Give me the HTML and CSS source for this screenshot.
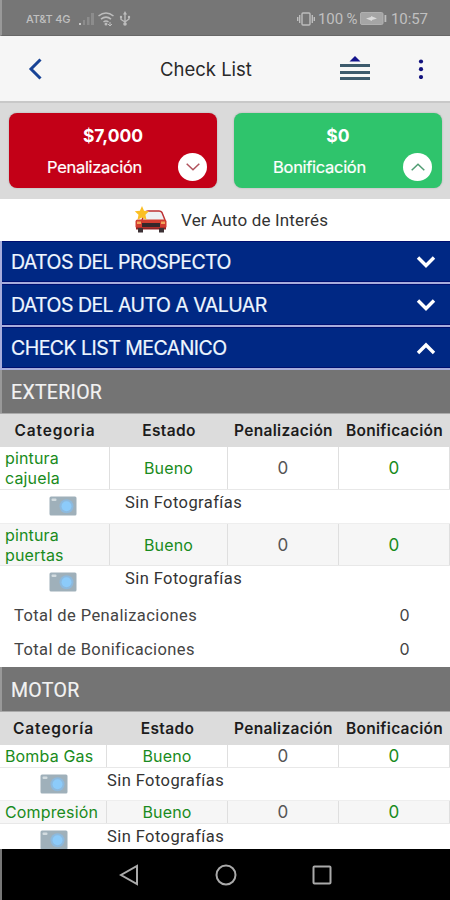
FILE: index.html
```html
<!DOCTYPE html>
<html lang="es">
<head>
<meta charset="utf-8">
<title>Check List</title>
<link rel="stylesheet" href="styles.css">
</head>
<body>
<svg class="defs" width="0" height="0">
  <symbol id="camera" viewBox="0 0 28 20">
    <rect x=".5" y=".5" width="27" height="19" rx="1.5" fill="#9fb0ba"/>
    <rect x="2.5" y="2.5" width="5" height="2.5" rx="1" fill="#d3dce0"/>
    <circle cx="17.5" cy="10.3" r="7" fill="#8db9dd"/>
    <circle cx="17.5" cy="10.3" r="5" fill="#8ccbfa"/>
  </symbol>
</svg>
<div class="screen">
  <header class="status">
    <span class="carrier">AT&amp;T 4G</span>
    <svg class="status-icons" width="54" height="16" viewBox="0 0 54 16">
      <g fill="#8c8c8c"><rect x="0" y="12" width="2" height="2" fill="#c8c8c8"/><rect x="4" y="9" width="2" height="5"/><rect x="8" y="6" width="2.5" height="8"/><rect x="12" y="2" width="3" height="12"/></g>
      <g fill="none" stroke="#bdbdbd" stroke-width="1.6"><path d="M19.5 5Q27-1 34.500 5M22 8.200Q27 4 32 8.200M24.500 11Q27 9 29.500 11"/><path d="M31 11v3m-2-1l2 2 2-2" stroke-width="1"/></g>
      <circle cx="27" cy="13" r="1.500" fill="#bdbdbd"/>
      <g fill="none" stroke="#bdbdbd" stroke-width="1.300"><path d="M46 2v11M42 5.500v3l4 2.500 4-3V5.500"/></g>
      <path d="M46 0l2 3.500h-4z" fill="#bdbdbd"/><circle cx="46" cy="13" r="1.800" fill="#bdbdbd"/><circle cx="42" cy="6" r="1.200" fill="#bdbdbd"/><circle cx="50" cy="6" r="1.200" fill="#bdbdbd"/>
    </svg>
    <svg class="vibrate" width="18" height="14" viewBox="0 0 18 14" fill="none" stroke="#bdbdbd" stroke-width="1.400"><rect x="5" y="1" width="8" height="12" rx="1"/><path d="M2.700 3v8M15.300 3v8M.700 5v4M17.300 5v4"/></svg>
    <span class="percent">100 %</span>
    <svg class="battery" width="27" height="13" viewBox="0 0 27 13"><rect x=".5" y=".5" width="22.500" height="12" rx="1.500" fill="#a5a5a5" stroke="#b0b0b0"/><path d="M6 6.500l5-1.500v-1l6 2.500-5 1.500v1z" fill="#dadada"/><rect x="24.500" y="3" width="1.800" height="7" fill="#bdbdbd"/></svg>
    <span class="clock">10:57</span>
  </header>
  <nav class="appbar">
    <svg class="back" width="14" height="22" viewBox="0 0 14 22" fill="none" stroke="#174396" stroke-width="3"><path d="M12.500 1.500L3 11l9.500 9.500"/></svg>
    <h1 class="title">Check List</h1>
    <svg class="sort" width="30" height="26" viewBox="0 0 30 26"><path d="M15 0l5.500 5.500h-11z" fill="#14148c"/><g fill="#3c5a6c"><rect y="8" width="30" height="3"/><rect y="15" width="30" height="3"/><rect y="21" width="30" height="3"/></g></svg>
    <svg class="more" width="6" height="20" viewBox="0 0 6 20" fill="#12127e"><circle cx="3" cy="2.500" r="2.100"/><circle cx="3" cy="10.200" r="2.100"/><circle cx="3" cy="18" r="2.100"/></svg>
  </nav>
  <section class="cards">
    <div class="card red">
      <strong class="amount">$7,000</strong><span class="label">Penalización</span>
      <span class="round"><svg width="14" height="8" viewBox="0 0 14 8" fill="none" stroke="#b0525c" stroke-width="1.500"><path d="M.7.7L7 6.800 13.300.7"/></svg></span>
    </div>
    <div class="card green">
      <strong class="amount">$0</strong><span class="label">Bonificación</span>
      <span class="round"><svg width="14" height="8" viewBox="0 0 14 8" fill="none" stroke="#4f9c72" stroke-width="1.500"><path d="M.7 7.300L7 1.200l6.300 6.100"/></svg></span>
    </div>
  </section>
  <div class="interest">
    <svg width="34" height="28" viewBox="0 0 34 28">
      <path d="M8 14l3-7.500q1-1.500 3-1.500h11q2 0 3 1.500l3 7.500" fill="#eef0f2" stroke="#bd3032" stroke-width="1.500"/>
      <rect x="1.500" y="13.500" width="31" height="9" rx="2" fill="#d13d30"/>
      <rect x="8" y="17" width="18" height="4" fill="#33282b"/><rect x="3" y="15.500" width="4" height="2.500" fill="#f3a55c"/><rect x="27" y="15.500" width="4" height="2.500" fill="#f3a55c"/>
      <path d="M2 21.500h30v2H2z" fill="#8c2526"/><path d="M4 22h5v4.500H4zM25 22h5v4.500h-5z" fill="#3c3135"/>
      <path d="M8 0l2 4.700 5 .5-3.600 3.600 1.100 5L8 11.400l-4.500 2.400 1-5L.8 5.200l5.100-.5z" fill="#fbbf24"/>
    </svg>
    <span>Ver Auto de Interés</span>
  </div>
  <section class="accordion">
    <div class="fold"><span>DATOS DEL PROSPECTO</span><svg width="20" height="14" viewBox="0 0 20 14"><path d="M2 2.500l8 8 8-8"/></svg></div>
    <div class="fold"><span>DATOS DEL AUTO A VALUAR</span><svg width="20" height="14" viewBox="0 0 20 14"><path d="M2 2.500l8 8 8-8"/></svg></div>
    <div class="fold"><span>CHECK LIST MECANICO</span><svg width="20" height="14" viewBox="0 0 20 14"><path d="M2 12l8-8 8 8"/></svg></div>
  </section>
  <main>
    <h2 class="group">EXTERIOR</h2>
    <section class="table first">
      <div class="row head"><span>Categoria</span><span>Estado</span><span>Penalización</span><span>Bonificación</span></div>
      <div class="row item"><span>pintura cajuela</span><span>Bueno</span><span class="zero">0</span><span class="zero">0</span></div>
      <div class="photo"><svg width="28" height="20"><use href="#camera"/></svg><span>Sin Fotografías</span></div>
      <div class="row item even"><span>pintura puertas</span><span>Bueno</span><span class="zero">0</span><span class="zero">0</span></div>
      <div class="photo"><svg width="28" height="20"><use href="#camera"/></svg><span>Sin Fotografías</span></div>
    </section>
    <div class="total"><span>Total de Penalizaciones</span><b>0</b></div>
    <div class="total"><span>Total de Bonificaciones</span><b>0</b></div>
    <h2 class="group motor">MOTOR</h2>
    <section class="table second">
      <div class="row head"><span>Categoría</span><span>Estado</span><span>Penalización</span><span>Bonificación</span></div>
      <div class="row item"><span>Bomba Gas</span><span>Bueno</span><span class="zero">0</span><span class="zero">0</span></div>
      <div class="photo"><svg width="28" height="20"><use href="#camera"/></svg><span>Sin Fotografías</span></div>
      <div class="row item even"><span>Compresión</span><span>Bueno</span><span class="zero">0</span><span class="zero">0</span></div>
      <div class="photo"><svg width="28" height="20"><use href="#camera"/></svg><span>Sin Fotografías</span></div>
    </section>
  </main>
  <footer class="navbar">
    <svg width="20" height="22" viewBox="0 0 20 22"><path d="M18 2v18L2 11z"/></svg>
    <svg width="22" height="22" viewBox="0 0 22 22"><circle cx="11" cy="11" r="9.500"/></svg>
    <svg width="20" height="20" viewBox="0 0 20 20"><rect x="1.500" y="1.500" width="17" height="17" rx="1"/></svg>
  </footer>
</div>
</body>
</html>
```

FILE: styles.css
```css
* { box-sizing: border-box; }
body { margin: 0; background: #fff; font-family: Inter, "Liberation Sans", sans-serif; color: #333; }
svg { display: block; flex: none; }
.defs { position: absolute; }
.screen { width: 450px; height: 900px; display: flex; flex-direction: column; overflow: hidden; }
.status, .appbar, .cards, .interest, .accordion, .group, .total, .navbar { flex: none; }
h1, h2 { margin: 0; font-weight: 400; }
span, h1, h2, strong { white-space: nowrap; }

.status { height: 36px; display: flex; align-items: center; background: #767676; border-left: 2px solid #999; border-bottom: 1px solid #686868; padding: 2px 20px 0 24px; color: #c0c0c0; font-family: Roboto, sans-serif; }
.carrier { width: 53px; font: 500 11px Inter, sans-serif; letter-spacing: -.2px; }
.vibrate { margin-left: 164px; }
.percent { width: 41px; margin-left: 3px; font-size: 15px; letter-spacing: -.1px; }
.battery { margin-left: 1px; }
.clock { margin-left: 4px; font-size: 15px; letter-spacing: -.1px; }

.appbar { height: 67px; display: flex; align-items: center; background: #f6f6f6; border-bottom: 2px solid #c8c8c8; padding-left: 28px; }
.title { width: 180px; margin-left: 118px; font-size: 18.5px; color: #292929; }
.more { margin-left: 48px; }

.cards { height: 96px; display: flex; gap: 17px; background: #dadada; padding: 10px 8px 11px 9px; }
.card { position: relative; flex: 1; border-radius: 8px; color: #fff; text-align: center; box-shadow: 0 0 2px #aaa; }
.red { background: #c30017; }
.green { background: #2fc46c; }
.amount { display: block; padding-top: 11px; font-size: 17.5px; line-height: 24px; font-weight: 700; }
.label { display: block; margin: 7px 37px 0 0; font-size: 16.5px; line-height: 24px; letter-spacing: -.3px; -webkit-text-stroke: .2px currentColor; }
.round { position: absolute; right: 10px; bottom: 7px; width: 29px; height: 28px; border-radius: 50%; background: #fff; display: flex; align-items: center; justify-content: center; }

.interest { height: 42px; display: flex; align-items: center; padding: 0 0 0 134px; gap: 13px; font: 17px Roboto, sans-serif; letter-spacing: .17px; }
.accordion { height: 129px; background: #a8addc; padding-left: 2px; display: grid; grid-template-rows: 41px 41px 41px; gap: 2px; }
.fold { display: flex; align-items: center; justify-content: space-between; background: #002884; color: #eef6ff; padding: 0 14px 0 9px; font-size: 19.5px; letter-spacing: -.54px; border-bottom: 1px solid #000f70; border-top: 1px solid #000f70; -webkit-text-stroke: .2px currentColor; }
.fold path { fill: none; stroke: #fff; stroke-width: 3.4; }

main { flex: 1; min-height: 0; overflow: hidden; }
.group { height: 43px; line-height: 46px; border-left: 2px solid #999; background: #747474; color: #f2f2f2; padding-left: 9px; font-family: Roboto, sans-serif; font-size: 19.5px; letter-spacing: .3px; -webkit-text-stroke: .2px currentColor; }
.motor { height: 44px; line-height: 47px; }
.table { display: grid; }
.first { grid-template-rows: 34px 43px 33px 43px 33px; --columns: 110px 118px 111px 111px; }
.second { grid-template-rows: 34px 23px 32px 24px 32px; --columns: 107px 121px 111px 111px; }
.row { display: grid; grid-template-columns: var(--columns); }
.row > span { display: flex; align-items: center; justify-content: center; }
.head { background: #dcdcdc; border-top: 1px solid #aaa; color: #1c1c1c; font-size: 15.5px; font-weight: 600; letter-spacing: .3px; }
.head > span:first-child { letter-spacing: .85px; }
.item { border-bottom: 1px solid #e8e8e8; font-size: 16px; line-height: 20px; letter-spacing: .15px; }
.item > span { border-right: 1px solid #dfdfdf; color: #198b20; }
.item > span:first-child { justify-content: flex-start; white-space: normal; padding-left: 5px; }
.item > span:nth-child(3) { color: #555; }
.item .zero { font-size: 17px; }
.even { background: #f6f6f6; border-top: 1px solid #eee; }
.photo { display: flex; align-items: flex-start; padding: 6px 0 0 49px; font: 16.5px/18px Roboto, sans-serif; letter-spacing: .42px; }
.photo span { margin: -2px 0 0 48px; }
.second .photo { padding-left: 40px; }
.second .photo span { margin-left: 39px; }
.total { height: 34px; display: flex; align-items: center; justify-content: space-between; padding: 0 40px 2px 14px; font: 16.5px Roboto, sans-serif; letter-spacing: .4px; color: #444; }
.total b { font: 16px Inter, sans-serif; }
.navbar { height: 51px; display: flex; align-items: center; background: #000; border-left: 2px solid #777; padding-left: 117px; gap: 76px; }
.navbar svg:last-child { margin-left: -1px; }
.navbar svg { fill: none; stroke: #aaa; stroke-width: 2; }
```
